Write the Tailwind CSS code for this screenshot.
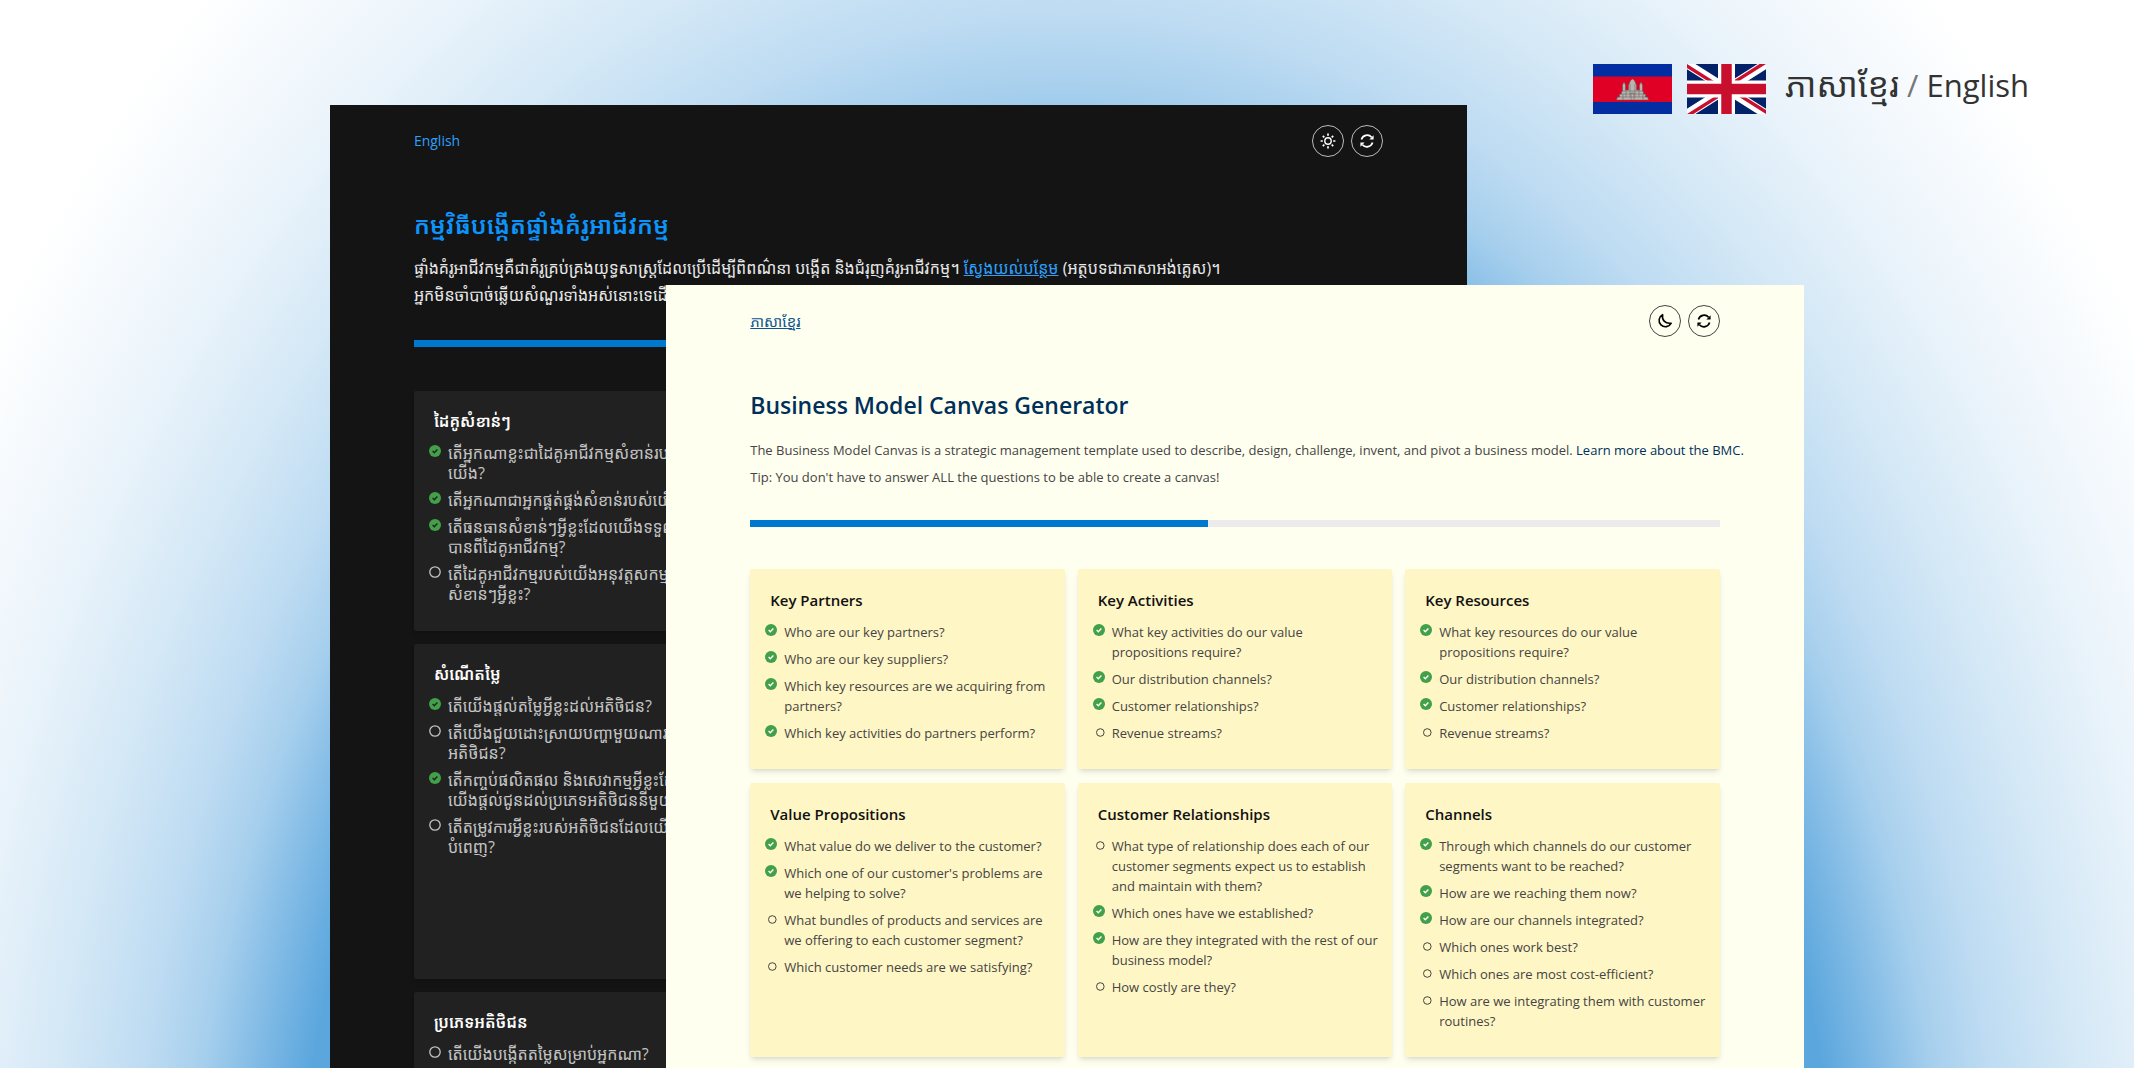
<!DOCTYPE html>
<html lang="en">
<head>
<meta charset="utf-8">
<meta name="viewport" content="width=device-width, initial-scale=1">
<title>Business Model Canvas Generator</title>
<script src="https://cdn.jsdelivr.net/npm/@tailwindcss/browser@4"></script>
</head>
<body class="font-['Open_Sans','Noto_Sans_Khmer','Noto_Sans',sans-serif]">
<svg class="hidden" aria-hidden="true">
  <symbol id="done" viewBox="0 0 12 12"><circle cx="6" cy="6" r="6" fill="#41a048"/><path d="M3.6 6.1l1.7 1.6 3.1-3.2" fill="none" stroke="currentColor" stroke-width="1.4"/></symbol>
  <symbol id="open" viewBox="0 0 12 12"><circle cx="6" cy="6" r="5.2" fill="none" stroke="currentColor" stroke-width="1.3"/></symbol>
  <symbol id="open-small" viewBox="0 0 12 12"><circle cx="7.3" cy="7.5" r="3.8" fill="none" stroke="currentColor" stroke-width="1"/></symbol>
  <symbol id="sync" viewBox="0 0 16 16"><path d="M2.400 6.400A6 6 0 0 1 12.600 4.200M13.600 9.600A6 6 0 0 1 3.400 11.800" fill="none" stroke="currentColor" stroke-width="1.7"/><path d="M14.600 2.200v4.200h-4.200zM1.400 13.800V9.600h4.200z" fill="currentColor"/></symbol>
  <symbol id="moon" viewBox="0 0 16 16"><path d="M5.600 1.600C4.600 6.800 8 11 14.200 10.200A6.400 6.400 0 1 1 5.600 1.600z" fill="none" stroke="currentColor" stroke-width="1.6" stroke-linejoin="round"/></symbol>
  <symbol id="sun" viewBox="0 0 16 16"><circle cx="8" cy="8" r="3.2" fill="none" stroke="currentColor" stroke-width="1.4"/><path d="M8 .6v2.200M8 13.200v2.200M.6 8h2.200M13.200 8h2.200M2.800 2.800l1.500 1.500M11.700 11.700l1.500 1.500M2.800 13.200l1.500-1.500M11.700 4.300l1.500-1.500" stroke="currentColor" stroke-width="1.7"/></symbol>
</svg>

<main class="relative h-screen overflow-hidden bg-[radial-gradient(ellipse_51%_140%_at_50%_122%,#5aa6dd_71%,#80bae5_76%,#a6cfed_81%,#bddbf2_86%,#d4e8f6_94%,#ebf4fb_104%,#ffffff_118%)]">

  <!-- Language banner -->
  <header class="flex items-center justify-end gap-[15px] pt-[62px] pr-[105px] text-[#333]">
    <svg class="h-[50px] w-[79px]" viewBox="0 0 79 50" role="img" aria-label="Cambodia">
      <path fill="#032ea1" d="M0 0h79v50H0z"/><path fill="#e00025" d="M0 12.500h79V38H0z"/>
      <g fill="#b9b4b0" stroke="#5f5656" stroke-width=".5"><path d="M23.500 36l1-3h2v-3h2v-2l1-1v-6l1.500-3 1.500 3v5h3v-5l1-2 1-2.500 2-1.500 2 1.500 1 2.500 1 2v5h3v-5l1.500-3 1.500 3v6l1 1v2h2v3h2l1 3z"/><path d="M25 33h29M27 30h25M29 27h21M33 24v9M37 20v13M42 20v13M46 24v9M38 36v-7h3v7M30 30v6M50 30v6" fill="none"/></g>
    </svg>
    <svg class="h-[50px] w-[79px]" viewBox="0 0 79 50" role="img" aria-label="United Kingdom">
      <path fill="#012169" d="M0 0h79v50H0z"/>
      <path stroke="#fff" stroke-width="9" d="M0 0l79 50M79 0L0 50"/>
      <path fill="#c8102e" d="M0 0l39.500 25h-6.300L0 4zM79 0L39.500 25h-6L72.500 0zM79 50L39.500 25h6.300L79 46zM0 50l39.500-25h6L6.500 50z"/>
      <path stroke="#fff" stroke-width="17" d="M39.500 0v50M0 25h79"/>
      <path stroke="#c8102e" stroke-width="10.500" d="M39.500 0v50M0 25h79"/>
    </svg>
    <p class="ml-1 pb-2 text-[31px] leading-[44px]"><span lang="km" class="text-[34px]">ភាសាខ្មែរ</span> <span class="text-[#777]">/</span> English</p>
  </header>

  <!-- Dark window, Khmer -->
  <section lang="km" class="absolute top-[105px] bottom-0 left-[15.46%] w-[53.3%] overflow-hidden bg-[#141414] px-[84px] pt-5 text-base leading-5 text-[#d9d9d9]">
    <nav class="flex h-8 items-center gap-[7px]">
      <a href="#" lang="en" class="mr-auto text-sm text-[#2ea0fb]">English</a>
      <button type="button" aria-label="Light mode" class="grid size-8 place-items-center rounded-full border border-[#bbb] text-white"><svg class="size-4"><use href="#sun"/></svg></button>
      <button type="button" aria-label="Reset" class="grid size-8 place-items-center rounded-full border border-[#bbb] text-white"><svg class="size-4"><use href="#sync"/></svg></button>
    </nav>
    <h1 class="mt-[50px] text-2xl leading-9 font-semibold whitespace-nowrap text-[#0c94fb]">កម្មវិធីបង្កើតផ្ទាំងគំរូអាជីវកម្ម</h1>
    <p class="mt-3 leading-[27px] whitespace-nowrap text-[#e8e8e8]">ផ្ទាំងគំរូអាជីវកម្មគឺជាគំរូគ្រប់គ្រងយុទ្ធសាស្ត្រដែលប្រើដើម្បីពិពណ៌នា បង្កើត និងជំរុញគំរូអាជីវកម្ម។ <a href="#" class="text-[#2ea0fb] underline">ស្វែងយល់បន្ថែម</a> (អត្ថបទជាភាសាអង់គ្លេស)។<br>អ្នកមិនចាំបាច់ឆ្លើយសំណួរទាំងអស់នោះទេដើម្បីបង្កើតផ្ទាំងគំរូ</p>
    <div role="progressbar" aria-label="វឌ្ឍនភាព" aria-valuenow="47" aria-valuemin="0" aria-valuemax="100" class="mt-[31px] h-[7px] bg-[#333]"><div class="h-full bg-[#0078d0]" style="width:47.2%"></div></div>
    <div class="mt-11 grid grid-cols-3 gap-[13px] whitespace-nowrap">
      <article class="col-start-1 rounded-xs bg-[#212121] px-5 pt-[18px] pb-[27px] shadow-md">
        <h2 class="text-base leading-6 font-semibold text-white">ដៃគូសំខាន់ៗ</h2>
        <ul class="-ml-[5px] mt-2.5 flex flex-col gap-[7px] text-[#c4c4c4]">
          <li class="flex gap-[7px]"><svg class="mt-0.5 size-3 shrink-0 text-[#212121]"><use href="#done"/></svg><span>តើអ្នកណាខ្លះជាដៃគូអាជីវកម្មសំខាន់របស់<br>យើង?</span></li>
          <li class="flex gap-[7px]"><svg class="mt-0.5 size-3 shrink-0 text-[#212121]"><use href="#done"/></svg><span>តើអ្នកណាជាអ្នកផ្គត់ផ្គង់សំខាន់របស់យើង?</span></li>
          <li class="flex gap-[7px]"><svg class="mt-0.5 size-3 shrink-0 text-[#212121]"><use href="#done"/></svg><span>តើធនធានសំខាន់ៗអ្វីខ្លះដែលយើងទទួល<br>បានពីដៃគូអាជីវកម្ម?</span></li>
          <li class="flex gap-[7px]"><svg class="mt-0.5 size-3 shrink-0"><use href="#open"/></svg><span>តើដៃគូអាជីវកម្មរបស់យើងអនុវត្តសកម្មភាព<br>សំខាន់ៗអ្វីខ្លះ?</span></li>
        </ul>
      </article>
      <article class="col-start-1 min-h-[335px] rounded-xs bg-[#212121] px-5 pt-[18px] pb-[27px] shadow-md">
        <h2 class="text-base leading-6 font-semibold text-white">សំណើតម្លៃ</h2>
        <ul class="-ml-[5px] mt-2.5 flex flex-col gap-[7px] text-[#c4c4c4]">
          <li class="flex gap-[7px]"><svg class="mt-0.5 size-3 shrink-0 text-[#212121]"><use href="#done"/></svg><span>តើយើងផ្តល់តម្លៃអ្វីខ្លះដល់អតិថិជន?</span></li>
          <li class="flex gap-[7px]"><svg class="mt-0.5 size-3 shrink-0"><use href="#open"/></svg><span>តើយើងជួយដោះស្រាយបញ្ហាមួយណារបស់<br>អតិថិជន?</span></li>
          <li class="flex gap-[7px]"><svg class="mt-0.5 size-3 shrink-0 text-[#212121]"><use href="#done"/></svg><span>តើកញ្ចប់ផលិតផល និងសេវាកម្មអ្វីខ្លះដែល<br>យើងផ្តល់ជូនដល់ប្រភេទអតិថិជននីមួយៗ?</span></li>
          <li class="flex gap-[7px]"><svg class="mt-0.5 size-3 shrink-0"><use href="#open"/></svg><span>តើតម្រូវការអ្វីខ្លះរបស់អតិថិជនដែលយើង<br>បំពេញ?</span></li>
        </ul>
      </article>
      <article class="col-start-1 rounded-xs bg-[#212121] px-5 pt-[18px] pb-[27px] shadow-md">
        <h2 class="text-base leading-6 font-semibold text-white">ប្រភេទអតិថិជន</h2>
        <ul class="-ml-[5px] mt-2.5 flex flex-col gap-[7px] text-[#c4c4c4]">
          <li class="flex gap-[7px]"><svg class="mt-0.5 size-3 shrink-0"><use href="#open"/></svg><span>តើយើងបង្កើតតម្លៃសម្រាប់អ្នកណា?</span></li>
        </ul>
      </article>
    </div>
  </section>

  <!-- Light window, English -->
  <section class="absolute top-[285px] bottom-0 left-[31.22%] w-[53.3%] overflow-hidden bg-[#fffff0] px-[84px] pt-5 text-[13px] leading-5 text-[#444]">
    <nav class="flex h-8 items-center gap-[7px]">
      <a href="#" lang="km" class="mr-auto text-[15px] text-[#0b5591] underline">ភាសាខ្មែរ</a>
      <button type="button" aria-label="Dark mode" class="grid size-8 place-items-center rounded-full border border-[#444] text-black"><svg class="size-4"><use href="#moon"/></svg></button>
      <button type="button" aria-label="Reset" class="grid size-8 place-items-center rounded-full border border-[#444] text-black"><svg class="size-4"><use href="#sync"/></svg></button>
    </nav>
    <h1 class="mt-[50px] text-[23px] leading-9 font-semibold whitespace-nowrap text-[#00305a]">Business Model Canvas Generator</h1>
    <p class="mt-3.5 leading-[27px] whitespace-nowrap">The Business Model Canvas is a strategic management template used to describe, design, challenge, invent, and pivot a business model. <a href="#" class="text-[#00305a]">Learn more about the BMC.</a><br>Tip: You don't have to answer ALL the questions to be able to create a canvas!</p>
    <div role="progressbar" aria-label="Progress" aria-valuenow="47" aria-valuemin="0" aria-valuemax="100" class="mt-[29px] h-[7px] bg-[#ebebeb]"><div class="h-full bg-[#0078d0]" style="width:47.2%"></div></div>
    <div id="cards" class="mt-[42px] grid grid-cols-3 gap-x-[13px] gap-y-3.5"></div>
  </section>
</main>

<script>
const cards = [
  ["Key Partners", ["+Who are our key partners?", "+Who are our key suppliers?", "+Which key resources are we acquiring from|partners?", "+Which key activities do partners perform?"]],
  ["Key Activities", ["+What key activities do our value|propositions require?", "+Our distribution channels?", "+Customer relationships?", "-Revenue streams?"]],
  ["Key Resources", ["+What key resources do our value|propositions require?", "+Our distribution channels?", "+Customer relationships?", "-Revenue streams?"]],
  ["Value Propositions", ["+What value do we deliver to the customer?", "+Which one of our customer's problems are|we helping to solve?", "-What bundles of products and services are|we offering to each customer segment?", "-Which customer needs are we satisfying?"]],
  ["Customer Relationships", ["-What type of relationship does each of our|customer segments expect us to establish|and maintain with them?", "+Which ones have we established?", "+How are they integrated with the rest of our|business model?", "-How costly are they?"]],
  ["Channels", ["+Through which channels do our customer|segments want to be reached?", "+How are we reaching them now?", "+How are our channels integrated?", "-Which ones work best?", "-Which ones are most cost-efficient?", "-How are we integrating them with customer|routines?"]]
];
document.getElementById("cards").innerHTML = cards.map(([title, items]) => `
  <article class="rounded-xs bg-[#fff6c5] px-5 pt-[19px] pb-[26px] whitespace-nowrap shadow-md">
    <h2 class="text-[15px] leading-6 font-semibold text-[#111]">${title}</h2>
    <ul class="-ml-[5px] mt-2.5 flex flex-col gap-[7px]">${items.map(t => `
      <li class="flex gap-[7px]"><svg class="mt-0.5 size-3 shrink-0 ${t[0] === "+" ? "text-white" : "text-[#444]"}"><use href="#${t[0] === "+" ? "done" : "open-small"}"/></svg><span>${t.slice(1).replaceAll("|", "<br>")}</span></li>`).join("")}
    </ul>
  </article>`).join("");
</script>
</body>
</html>
